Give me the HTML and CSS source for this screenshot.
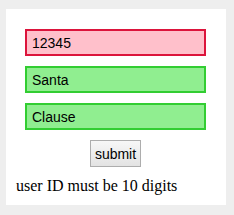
FILE: index.html
```html
<!DOCTYPE html>
<html lang="en">

<head>
    <meta charset="UTF-8">
    <meta name="viewport" content="width=device-width, initial-scale=1.0">
    <title>Sign up</title>
    <link rel="stylesheet" href="styles.css">
</head>

<body>
    <form class="card">
        <input type="text" class="field field-bad" value="12345">
        <input type="text" class="field field-ok" value="Santa">
        <input type="text" class="field field-ok" value="Clause">
        <button type="button" class="submit-btn">submit</button>
        <div class="message">user ID must be 10 digits</div>
    </form>
</body>

</html>
```

FILE: styles.css
```css
body {
    margin: 0;
    padding: 9px 8px 10px 6px;
    background-color: #eeeeee;
}

.card {
    display: flex;
    flex-direction: column;
    align-items: center;
    width: 220px;
    box-sizing: border-box;
    padding: 20px 11px 10px 10px;
    margin: 0;
    background-color: #fff;
}

.field {
    width: 181px;
    height: 27px;
    box-sizing: border-box;
    margin: 0 0 10px 0;
    padding: 0 5px;
    border: 2px solid;
    font-family: "Liberation Sans", Arial, sans-serif;
    font-size: 14px;
    color: #000;
    outline: none;
}

.field-bad {
    border-color: crimson;
    background-color: pink;
}

.field-ok {
    border-color: #32cd32;
    background-color: lightgreen;
}

.submit-btn {
    height: 27px;
    width: 51px;
    padding: 0;
    border: 1px solid #adadad;
    background: linear-gradient(#f7f7f7, #e3e3e3);
    font-family: "Liberation Sans", Arial, sans-serif;
    font-size: 14px;
    color: #000;
}

.message {
    align-self: flex-start;
    margin-top: 10px;
    font-family: "Liberation Serif", "Times New Roman", serif;
    font-size: 16px;
    line-height: 18px;
}
```
